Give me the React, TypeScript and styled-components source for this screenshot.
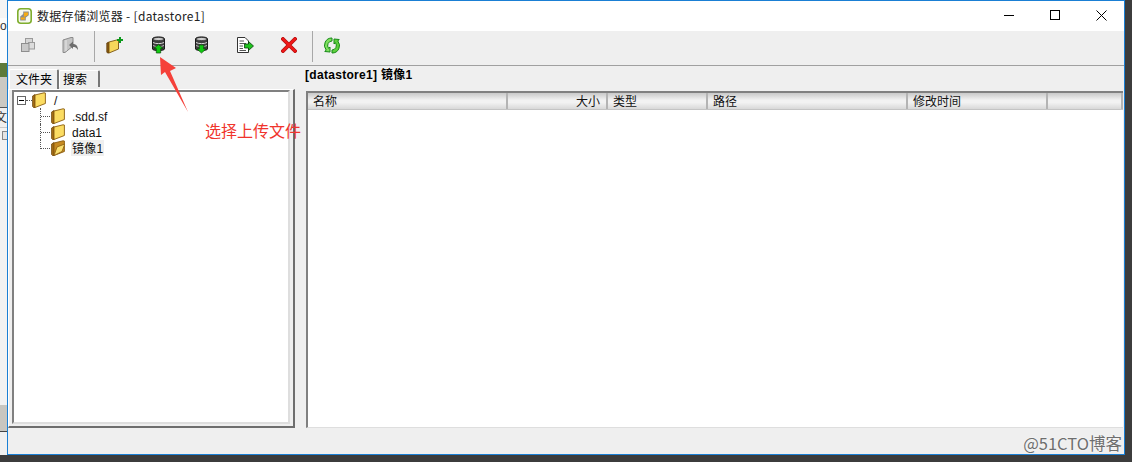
import React from 'react';
import styled, { createGlobalStyle } from 'styled-components';

const CJK = '"Noto Sans CJK SC", "Liberation Sans", sans-serif';

const GlobalStyle = createGlobalStyle`
  html, body {
    margin: 0;
    padding: 0;
    background: #3c3c3c;
  }
  * {
    box-sizing: border-box;
  }
`;

const Screen = styled.div`
  position: relative;
  width: 1132px;
  height: 462px;
  overflow: hidden;
  display: flex;
  flex-direction: column;
  background: #3c3c3c;
  font-family: ${CJK};
  color: #000;
`;

const Desktop = styled.div`
  display: flex;
  height: 455px;
  flex-shrink: 0;
`;

const BehindWindow = styled.div`
  width: 7px;
  display: flex;
  flex-direction: column;
  overflow: hidden;
  background: #f0f0f0;
`;

const BehindBlock = styled.div<{ $h: number; $bg: string; $line?: string }>`
  height: ${({ $h }) => $h}px;
  flex-shrink: 0;
  background: ${({ $bg }) => $bg};
  border-bottom: ${({ $line }) => ($line ? `1px solid ${$line}` : 'none')};
  overflow: hidden;
`;

const BehindText = styled.div`
  margin-left: -5px;
  font-size: 12px;
  line-height: 18px;
  color: #333;
  white-space: nowrap;
`;

const BehindWord = styled.div`
  font-family: "Liberation Sans", sans-serif;
  font-size: 12px;
  line-height: 16px;
  color: #333;
`;

const BehindIcon = styled.div`
  width: 5px;
  height: 9px;
  margin: 3px 0 0 2px;
  border: 1px solid #888;
  border-right: none;
  background: #e4e4e4;
`;

const Window = styled.div`
  width: 1118px;
  display: flex;
  flex-direction: column;
  border: 1px solid #1a7fd4;
  background: #efefef;
`;

const TitleBar = styled.div`
  height: 30px;
  display: flex;
  align-items: center;
  background: #fff;
  padding: 0 0 1px 9px;
  flex-shrink: 0;
`;

const TitleText = styled.span`
  margin-left: 5px;
  font-size: 12px;
  letter-spacing: 0.3px;
  color: #222;
  white-space: nowrap;
`;

const CaptionButtons = styled.div`
  margin-left: auto;
  display: flex;
`;

const CaptionButton = styled.div`
  width: 46px;
  height: 29px;
  display: flex;
  align-items: center;
  justify-content: center;
`;

const Toolbar = styled.div`
  height: 35px;
  flex-shrink: 0;
  display: flex;
  background: #efefef;
  border-bottom: 1px solid #a0a0a0;
`;

const ToolGroup = styled.div<{ $cell: number; $shift?: number }>`
  display: grid;
  grid-auto-flow: column;
  grid-auto-columns: ${({ $cell }) => $cell}px;
  margin-left: ${({ $shift }) => $shift ?? 0}px;
`;

const ToolButton = styled.div`
  height: 28px;
  display: flex;
  align-items: center;
  justify-content: center;
`;

const ToolSeparator = styled.div<{ $left: number }>`
  width: 1px;
  height: 31px;
  margin-left: ${({ $left }) => $left}px;
  background: #a8a8a8;
`;

const Body = styled.div`
  height: 362px;
  flex-shrink: 0;
  display: flex;
`;

const LeftPane = styled.div`
  width: 287px;
  display: flex;
  flex-direction: column;
  padding-top: 3px;
`;

const TabRow = styled.div`
  height: 20px;
  display: flex;
  align-items: flex-end;
  padding-left: 1px;
  flex-shrink: 0;
`;

const Tab = styled.div<{ $active?: boolean }>`
  height: ${({ $active }) => ($active ? 20 : 17)}px;
  width: ${({ $active }) => ($active ? 50 : 41)}px;
  margin-bottom: ${({ $active }) => ($active ? 0 : 2)}px;
  padding-left: ${({ $active }) => ($active ? 6 : 3)}px;
  font-size: 12px;
  line-height: ${({ $active }) => ($active ? 17 : 15)}px;
  background: #efefef;
  border-top: 1px solid #fff;
  border-left: 1px solid #fff;
  border-right: 2px solid #777;
  border-radius: 2px 2px 0 0;
  white-space: nowrap;
`;

const TabPanel = styled.div`
  flex: 1;
  min-height: 0;
  display: flex;
  padding: 0 2px 2px 3px;
  border-top: 1px solid #fff;
  border-left: 1px solid #fff;
  border-right: 2px solid #6e6e6e;
  border-bottom: 2px solid #6e6e6e;
  background: #efefef;
`;

const TreeBox = styled.div`
  flex: 1;
  background: #fff;
  border-top: 2px solid #808080;
  border-left: 2px solid #808080;
  border-right: 2px solid #dedede;
  border-bottom: 2px solid #dedede;
  margin-right: 1px;
`;

const TreeRow = styled.div<{ $child?: boolean }>`
  height: 16px;
  display: flex;
  align-items: center;
  margin-left: ${({ $child }) => ($child ? 26 : 3)}px;
  font-size: 12px;
  color: #111;
`;

const Expander = styled.div`
  width: 9px;
  height: 9px;
  border: 1px solid #666;
  background: #fff;
  display: flex;
  align-items: center;
  justify-content: center;
  flex-shrink: 0;
  &::after {
    content: '';
    width: 5px;
    height: 1px;
    background: #000;
  }
`;

const DotLine = styled.div`
  width: 6px;
  border-top: 1px dotted #555;
  flex-shrink: 0;
`;

const Connector = styled.div<{ $last?: boolean }>`
  width: 11px;
  height: ${({ $last }) => ($last ? 9 : 16)}px;
  align-self: flex-start;
  flex-shrink: 0;
  border-left: 1px dotted #555;
  background: repeating-linear-gradient(90deg, #555 0 1px, transparent 1px 2px) 0 8px / 100% 1px no-repeat;
`;

const TreeLabel = styled.span<{ $selected?: boolean; $gap: number }>`
  margin-left: ${({ $gap }) => $gap}px;
  padding: 0 1px;
  height: 16px;
  line-height: 16px;
  white-space: nowrap;
  letter-spacing: 0.3px;
  background: ${({ $selected }) => ($selected ? '#efefef' : 'transparent')};
`;

const Latin = styled.span`
  font-family: "Liberation Sans", sans-serif;
  font-size: 12px;
  letter-spacing: 0;
`;

const RightPane = styled.div`
  flex: 1;
  min-width: 0;
  display: flex;
  flex-direction: column;
  padding: 0 1px 0 11px;
`;

const PathLabel = styled.div`
  height: 25px;
  flex-shrink: 0;
  margin-left: -1px;
  font-family: "Liberation Sans", ${CJK};
  font-weight: 700;
  font-size: 12px;
  line-height: 18px;
  letter-spacing: 0.3px;
  white-space: nowrap;
`;

const FileList = styled.div`
  flex: 1;
  min-height: 0;
  display: flex;
  flex-direction: column;
  background: #fff;
  border-top: 2px solid #808080;
  border-left: 2px solid #808080;
  border-bottom: 1px solid #dedede;
`;

const ColumnRow = styled.div`
  height: 17px;
  display: flex;
  flex-shrink: 0;
  border-bottom: 1px solid #c4c4c4;
  background: linear-gradient(#c9c9c9, #f2f2f2 45%, #f2f2f2 60%, #d8d8d8);
`;

const ColumnHead = styled.div<{ $w: number; $right?: boolean }>`
  width: ${({ $w }) => $w}px;
  flex-shrink: 0;
  padding: 0 6px 0 5px;
  text-align: ${({ $right }) => ($right ? 'right' : 'left')};
  border-right: 2px solid #b4b4b4;
  font-size: 12px;
  line-height: 15px;
  color: #111;
  white-space: nowrap;
`;

const StatusBar = styled.div`
  flex: 1;
  background: #efefef;
`;

const BottomEdge = styled.div`
  flex: 1;
  background: #3c3c3c;
`;

const RightEdge = styled.div`
  width: 7px;
  background: #3c3c3c;
`;

const Annotation = styled.div`
  position: absolute;
  left: 205px;
  top: 119px;
  font-size: 16px;
  line-height: 22px;
  color: #f0342c;
  white-space: nowrap;
`;

const ArrowMark = styled.svg`
  position: absolute;
  left: 155px;
  top: 52px;
`;

const Watermark = styled.div`
  position: absolute;
  right: 10px;
  top: 432px;
  font-size: 16.5px;
  line-height: 22px;
  color: #6e6e6e;
  text-shadow: 0 0 2px #fff;
  white-space: nowrap;
`;

const AppLogo = () => (
  <svg width="15" height="16" viewBox="0 0 15 16">
    <rect x="0.8" y="0.8" width="13.4" height="14.4" rx="3" fill="#f6f8ee" stroke="#7fae2e" strokeWidth="1.6" />
    <path d="M3.2 8.6 L6.2 6 V3.6 H11.8 V7.2 L8.8 9.6 V12.4 H3.2 Z" fill="#8c8c8c" />
    <path d="M7 4.4 H11 V7 L8 8.8 H6.8 Z" fill="#f5ab14" />
    <path d="M4 9.4 H8 V11.6 H4 Z" fill="#f5ab14" />
  </svg>
);

const Copies = () => (
  <svg width="14" height="14" viewBox="0 0 14 14">
    <rect x="4.5" y="0.5" width="7" height="7" fill="#d6d6d6" stroke="#9a9a9a" />
    <rect x="7.5" y="4.5" width="6" height="6.5" fill="#dcdcdc" stroke="#9a9a9a" />
    <rect x="0.5" y="5.5" width="7.5" height="8" fill="#c9c9c9" stroke="#8e8e8e" />
  </svg>
);

const FolderBack = () => (
  <svg width="17" height="16" viewBox="0 0 17 16">
    <path d="M1 3 L9 0.5 H11 V9 L3 15.5 H1 Z" fill="#c4c4c4" stroke="#8a8a8a" />
    <path d="M4 3 L4 14" stroke="#e8e8e8" />
    <path d="M7 8 L11 4.5 V7 C14 7 16 9 16 13 C14.5 10.5 13 10 11 10 V12 Z" fill="#6e6e6e" />
  </svg>
);

const NewFolder = () => (
  <svg width="17" height="17" viewBox="0 0 17 17">
    <path d="M0.8 6 L3 5 V16 H1.5 L0.8 15 Z" fill="#8a5a12" stroke="#5e3c08" strokeWidth="0.8" />
    <path d="M3 5 L12.5 2.5 V12 L3 16 Z" fill="#f7d75a" stroke="#7a5410" strokeWidth="0.9" />
    <path d="M13 0 H15 V2 H17 V4 H15 V6 H13 V4 H11 V2 H13 Z" fill="#0c9a1c" />
  </svg>
);

const Database = ({ up }: { up?: boolean }) => (
  <svg width="13" height="18" viewBox="0 0 13 18">
    <path d="M0.5 3 C0.5 0.2 12.5 0.2 12.5 3 V13 C12.5 15 0.5 15 0.5 13 Z" fill="#3e3e3e" stroke="#1a1a1a" />
    <ellipse cx="6.5" cy="3" rx="5" ry="1.6" fill="#cfcfcf" stroke="#222" strokeWidth="0.6" />
    <path d="M1 6.5 C3.5 8 9.5 8 12 6.5" stroke="#d8d8d8" fill="none" />
    <path d="M1 9.5 C3.5 11 9.5 11 12 9.5" stroke="#b8b8b8" fill="none" />
    {up ? (
      <path d="M6.5 8.5 L11 12.5 H8.7 V17 H4.3 V12.5 H2 Z" fill="#12c912" stroke="#0a4d0a" strokeWidth="0.7" />
    ) : (
      <path d="M6.5 17 L11 13 H8.7 V9 H4.3 V13 H2 Z" fill="#12c912" stroke="#0a4d0a" strokeWidth="0.7" />
    )}
  </svg>
);

const DocArrow = () => (
  <svg width="17" height="16" viewBox="0 0 17 16">
    <path d="M0.5 0.5 H8 L11.5 4 V15.5 H0.5 Z" fill="#fff" stroke="#333" />
    <path d="M2.5 4 H7 M2.5 6.5 H9 M2.5 9 H6 M2.5 11.5 H6 M2.5 13.5 H9" stroke="#555" />
    <path d="M16.5 9 L11.5 4.5 V7 H7.5 V11 H11.5 V13.5 Z" fill="#1ec41e" stroke="#0b3f0b" strokeWidth="0.8" />
  </svg>
);

const RedCross = () => (
  <svg width="16" height="16" viewBox="0 0 16 16">
    <path d="M2 2 L14 14 M14 2 L2 14" stroke="#b01212" strokeWidth="3.8" strokeLinecap="square" />
    <path d="M2 2 L14 14 M14 2 L2 14" stroke="#f01818" strokeWidth="2.4" strokeLinecap="square" />
  </svg>
);

const Refresh = () => (
  <svg width="16" height="17" viewBox="0 0 16 17">
    <path d="M8 1 A7.3 7.3 0 0 0 2.2 13 L0.8 14.5 L6 15 L6 10 L4.6 11.3 A4.5 4.5 0 0 1 8 4 Z" fill="#7fe05e" stroke="#168a16" strokeWidth="1" />
    <path d="M8 16 A7.3 7.3 0 0 0 13.8 4 L15.2 2.5 L10 2 L10 7 L11.4 5.7 A4.5 4.5 0 0 1 8 13 Z" fill="#5ed03e" stroke="#168a16" strokeWidth="1" />
  </svg>
);

const Folder = ({ open }: { open?: boolean }) => (
  <svg width="14" height="16" viewBox="0 0 14 16">
    <path d="M0.6 4 L3 2.5 V15.5 H1.5 L0.6 14.5 Z" fill="#a86f16" stroke="#6b4508" strokeWidth="0.8" />
    <path d="M3 3 L12 0.8 L13.4 1 V11.5 L3 15.5 Z" fill={open ? '#c68a22' : '#fbdc62'} stroke="#8a5c10" strokeWidth="0.9" />
    {open && <path d="M3 15.5 L6 7 L13.8 4 L11 11.5 Z" fill="#fbe070" stroke="#8a5c10" strokeWidth="0.8" />}
  </svg>
);

const columns = [
  { label: '名称', w: 200 },
  { label: '大小', w: 100, right: true },
  { label: '类型', w: 100 },
  { label: '路径', w: 200 },
  { label: '修改时间', w: 140 },
  { label: '', w: 75 },
];

const App: React.FC = () => {
  return (
    <>
      <GlobalStyle />
      <Screen>
        <Desktop>
          <BehindWindow>
            <BehindBlock $h={18} $bg="#f4f4f4" />
            <BehindBlock $h={45} $bg="#fbfbfb">
              <BehindWord>o</BehindWord>
            </BehindBlock>
            <BehindBlock $h={14} $bg="#5e7a3a" />
            <BehindBlock $h={31} $bg="#cbc9c3" $line="#555" />
            <BehindBlock $h={20} $bg="#efefef" $line="#c8c8c8">
              <BehindText>文</BehindText>
            </BehindBlock>
            <BehindBlock $h={277} $bg="#f2f2f2">
              <BehindIcon />
            </BehindBlock>
            <BehindBlock $h={27} $bg="#c8c6c0" $line="#444" />
            <BehindBlock $h={23} $bg="#f0f0f0" />
          </BehindWindow>
          <Window>
            <TitleBar>
              <AppLogo />
              <TitleText>数据存储浏览器 - [datastore1]</TitleText>
              <CaptionButtons>
                <CaptionButton>
                  <svg width="11" height="11" viewBox="0 0 11 11"><path d="M0 5.5 H10" stroke="#000" /></svg>
                </CaptionButton>
                <CaptionButton>
                  <svg width="11" height="11" viewBox="0 0 11 11"><rect x="0.5" y="0.5" width="9" height="9" fill="none" stroke="#000" /></svg>
                </CaptionButton>
                <CaptionButton>
                  <svg width="11" height="11" viewBox="0 0 11 11"><path d="M0.5 0.5 L10.5 10.5 M10.5 0.5 L0.5 10.5" stroke="#000" /></svg>
                </CaptionButton>
              </CaptionButtons>
            </TitleBar>
            <Toolbar>
              <ToolGroup $cell={42} $shift={-1}>
                <ToolButton><Copies /></ToolButton>
                <ToolButton><FolderBack /></ToolButton>
              </ToolGroup>
              <ToolSeparator $left={3} />
              <ToolGroup $cell={43.5} $shift={-2}>
                <ToolButton><NewFolder /></ToolButton>
                <ToolButton><Database up /></ToolButton>
                <ToolButton><Database /></ToolButton>
                <ToolButton><DocArrow /></ToolButton>
                <ToolButton><RedCross /></ToolButton>
              </ToolGroup>
              <ToolSeparator $left={1.5} />
              <ToolGroup $cell={37}>
                <ToolButton><Refresh /></ToolButton>
              </ToolGroup>
            </Toolbar>
            <Body>
              <LeftPane>
                <TabRow>
                  <Tab $active>文件夹</Tab>
                  <Tab>搜索</Tab>
                </TabRow>
                <TabPanel>
                  <TreeBox>
                    <TreeRow>
                      <Expander />
                      <DotLine />
                      <Folder />
                      <TreeLabel $gap={7}><Latin>/</Latin></TreeLabel>
                    </TreeRow>
                    <TreeRow $child>
                      <Connector />
                      <Folder />
                      <TreeLabel $gap={6}><Latin>.sdd.sf</Latin></TreeLabel>
                    </TreeRow>
                    <TreeRow $child>
                      <Connector />
                      <Folder />
                      <TreeLabel $gap={6}><Latin>data1</Latin></TreeLabel>
                    </TreeRow>
                    <TreeRow $child>
                      <Connector $last />
                      <Folder open />
                      <TreeLabel $gap={6} $selected>镜像<Latin>1</Latin></TreeLabel>
                    </TreeRow>
                  </TreeBox>
                </TabPanel>
              </LeftPane>
              <RightPane>
                <PathLabel>[datastore1] 镜像1</PathLabel>
                <FileList>
                  <ColumnRow>
                    {columns.map((col) => (
                      <ColumnHead key={col.label || 'blank'} $w={col.w} $right={col.right}>
                        {col.label}
                      </ColumnHead>
                    ))}
                  </ColumnRow>
                </FileList>
              </RightPane>
            </Body>
            <StatusBar />
          </Window>
          <RightEdge />
        </Desktop>
        <BottomEdge />
        <ArrowMark width="36" height="64" viewBox="0 0 36 64">
          <path d="M5 5 L21 16 L15 19 L33 60 L10 20 L6 23 Z" fill="#f5413a" />
        </ArrowMark>
        <Annotation>选择上传文件</Annotation>
        <Watermark>@51CTO博客</Watermark>
      </Screen>
    </>
  );
};

export default App;
